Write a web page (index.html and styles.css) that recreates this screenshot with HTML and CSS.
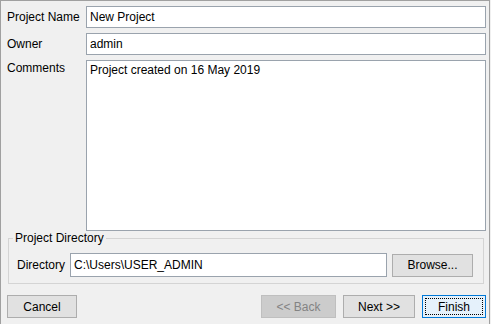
FILE: index.html
```html
<!DOCTYPE html>
<html lang="en">
<head>
  <meta charset="UTF-8" />
  <title>New Project</title>
  <link rel="stylesheet" href="styles.css">
</head>
<body>
  <div class="dialog">
    <div class="form">
      <label for="name">Project Name</label>
      <input type="text" id="name" value="New Project">
      <label for="owner">Owner</label>
      <input type="text" id="owner" value="admin">
      <label for="comments" class="top">Comments</label>
      <textarea id="comments">Project created on 16 May 2019</textarea>
    </div>

    <fieldset class="group">
      <legend>Project Directory</legend>
      <div class="dir-row">
        <label for="dir">Directory</label>
        <input type="text" id="dir" value="C:\Users\USER_ADMIN">
        <button class="btn browse">Browse...</button>
      </div>
    </fieldset>

    <div class="actions">
      <button class="btn cancel">Cancel</button>
      <div class="nav">
        <button class="btn back" disabled>&lt;&lt; Back</button>
        <button class="btn next">Next &gt;&gt;</button>
        <button class="btn finish">Finish</button>
      </div>
    </div>
  </div>
</body>
</html>
```

FILE: styles.css
```css
body {
  margin: 0;
  background: #f0f0f0;
  font-family: "Liberation Sans", Arial, sans-serif;
  font-size: 12px;
  color: #000;
}

.dialog {
  box-sizing: border-box;
  width: 490px;
  height: 324px;
  padding: 5px 3px 0 6px;
  border: 1px solid #a0a0a0;
  border-bottom: none;
  background: #f0f0f0;
}

.form {
  display: grid;
  grid-template-columns: 79px 1fr;
  grid-template-rows: 22px 22px 171px;
  row-gap: 5px;
  align-items: center;
}

.form label.top {
  align-self: start;
  padding-top: 1px;
}

input, textarea {
  box-sizing: border-box;
  font-family: inherit;
  font-size: 12px;
  color: #000;
  background: #fff;
  border: 1px solid #9aa3ad;
  border-radius: 0;
  margin: 0;
  outline: none;
}

.form input {
  height: 22px;
  padding: 0 3px;
}

.form textarea {
  height: 171px;
  padding: 2px 3px;
  resize: none;
  line-height: 14px;
}

.group {
  margin: 0 2px 0 1px;
  padding: 0 10px 6px 8px;
  border: 1px solid #d4d4d4;
}

.group legend {
  margin-left: -4px;
  padding: 0 2px;
  line-height: 14px;
}

.dir-row {
  display: flex;
  align-items: center;
  margin-top: 8px;
}

.dir-row label {
  margin-right: 5px;
}

.dir-row input {
  flex: 1;
  height: 24px;
  padding: 0 3px;
}

.btn {
  box-sizing: border-box;
  height: 23px;
  margin: 0;
  padding: 0;
  font-family: inherit;
  font-size: 12px;
  color: #000;
  background: #e1e1e1;
  border: 1px solid #adadad;
  border-radius: 0;
}

.browse {
  width: 81px;
  margin-left: 5px;
}

.actions {
  display: flex;
  justify-content: space-between;
  margin-top: 11px;
}

.cancel {
  width: 70px;
}

.nav {
  display: flex;
  gap: 7px;
}

.back {
  width: 75px;
  color: #838383;
  background: #cccccc;
  border-color: #bfbfbf;
}

.next {
  width: 72px;
}

.finish {
  width: 64px;
  background: #e5f1fb;
  border-color: #0078d7;
  outline: 1px dotted #000;
  outline-offset: -4px;
}
```
